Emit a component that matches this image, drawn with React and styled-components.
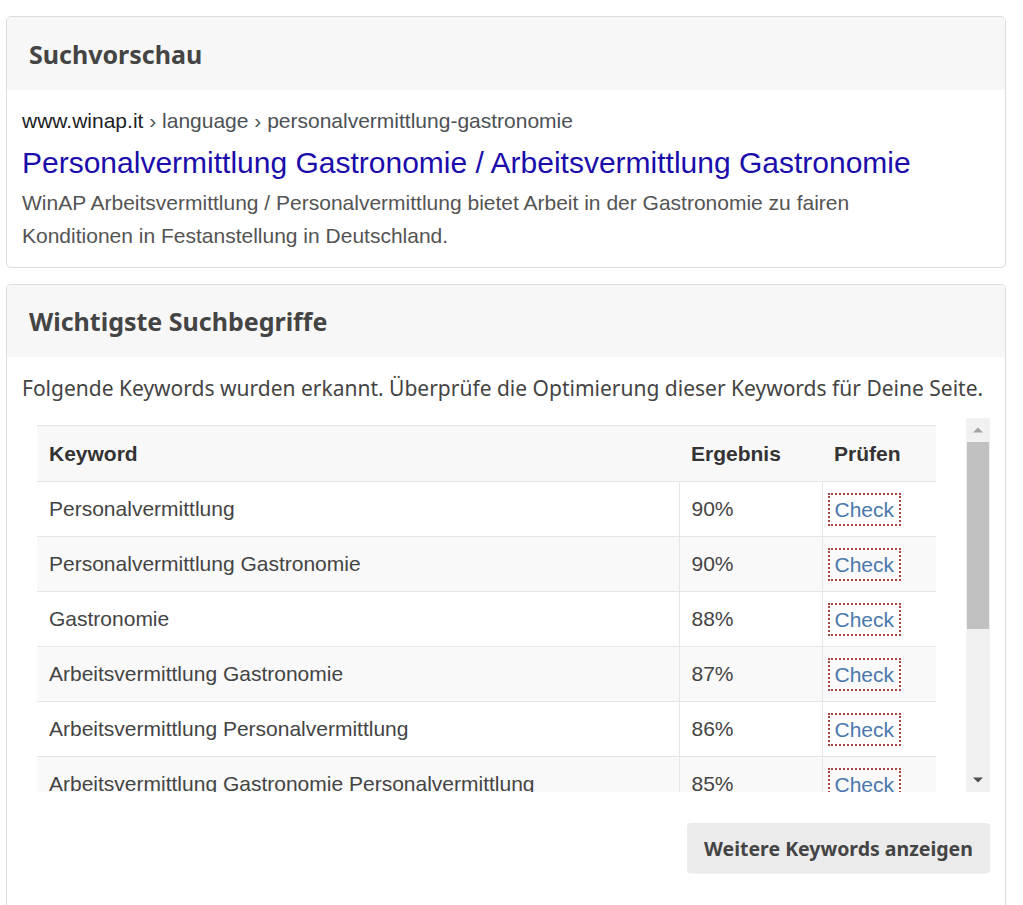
import React from "react"
import styled, { createGlobalStyle } from "styled-components"

const GlobalStyle = createGlobalStyle`
	html, body {
		margin: 0;
		padding: 0;
		background: #fff;
	}
	body {
		font-family: "Liberation Sans", Arial, sans-serif;
		color: #333;
	}
`

const Page = styled.div`
	width: 1000px;
	padding: 16px 0 0 6px;
	display: flex;
	flex-direction: column;
	gap: 16px;
`

const Card = styled.section`
	border: 1px solid #dcdcdc;
	border-radius: 5px;
	background: #fff;
	overflow: hidden;
	${p => p.$open && "border-bottom: none; border-bottom-left-radius: 0; border-bottom-right-radius: 0;"}
`

const CardHead = styled.h2`
	margin: 0;
	height: ${p => p.$h || "73px"};
	padding: 0 22px;
	display: flex;
	align-items: center;
	background: #f7f7f7;
	font-family: "Noto Sans", "Open Sans", sans-serif;
	font-size: 25px;
	font-weight: 700;
	color: #444;
`

const CardBody = styled.div`
	padding: ${p => p.$pad || "15px"};
`

const Crumbs = styled.div`
	font-size: 21px;
	line-height: 28px;
	color: #4d5156;
	white-space: nowrap;

	b {
		font-weight: 400;
		color: #202124;
	}
`

const ResultTitle = styled.a`
	display: block;
	margin-top: 9px;
	font-size: 30px;
	line-height: 38px;
	color: #1a0dab;
	text-decoration: none;
	white-space: nowrap;
`

const ResultDesc = styled.p`
	margin: 4px 0 0;
	max-width: 900px;
	font-size: 21px;
	line-height: 33px;
	color: #545454;
`

const Intro = styled.p`
	margin: 15px 0 0;
	font-family: "Noto Sans", "Open Sans", sans-serif;
	font-size: 21px;
	line-height: 32px;
	color: #444;
	white-space: nowrap;
`

const ScrollArea = styled.div`
	margin-top: 14px;
	height: 374px;
	display: flex;
`

const Viewport = styled.div`
	flex: 1;
	padding: 7px 31px 0 15px;
	overflow: hidden;
`

const ScrollBar = styled.div`
	width: 24px;
	display: flex;
	flex-direction: column;
	background: #f1f1f1;
`

const ScrollButton = styled.div`
	height: 24px;
	display: flex;
	align-items: center;
	justify-content: center;
	color: ${p => (p.$disabled ? "#a3a3a3" : "#505050")};
`

const Track = styled.div`
	flex: 1;
	padding: 0 1px;
`

const Thumb = styled.div`
	height: 187px;
	background: #c1c1c1;
`

const Table = styled.table`
	width: 899px;
	border-collapse: collapse;
	border-top: 1px solid #e3e3e3;
	font-size: 21px;
	color: #444;
`

const HeadCell = styled.th`
	height: 55px;
	padding: 0 12px;
	text-align: left;
	font-weight: 700;
	color: #333;
	background: #f8f8f8;
	width: ${p => p.$w || "auto"};
`

const Row = styled.tr`
	background: ${p => (p.$alt ? "#f9f9f9" : "#fff")};
	border-top: 1px solid #e6e6e6;
`

const Cell = styled.td`
	height: 54px;
	padding: 0 12px;
	border-left: ${p => (p.$first ? "none" : "1px solid #e6e6e6")};
	white-space: nowrap;
`

const CheckLink = styled.a`
	display: inline-block;
	margin-left: -7px;
	padding: 3px 5px 2px 5px;
	border: 2px dotted #a8453d;
	color: #4a78ad;
	text-decoration: none;
	line-height: 24px;
`

const Actions = styled.div`
	display: flex;
	justify-content: flex-end;
	padding-top: 31px;
	padding-bottom: 40px;
`

const MoreButton = styled.button`
	height: 50px;
	width: 303px;
	padding: 0;
	border: none;
	border-radius: 4px;
	background: #ebebeb;
	box-shadow: 0 1px 1px rgba(0, 0, 0, 0.05);
	font-family: "Noto Sans", "Open Sans", sans-serif;
	font-size: 19.5px;
	font-weight: 700;
	color: #444;
	cursor: pointer;
`

const Arrow = ({ down }) => (
	<svg width="10" height="6" viewBox="0 0 10 6">
		<polygon points={down ? "0,0.5 10,0.5 5,5.5" : "0,5.5 10,5.5 5,0.5"} fill="currentColor"/>
	</svg>
)

const keywords = [
	["Personalvermittlung", "90%"],
	["Personalvermittlung Gastronomie", "90%"],
	["Gastronomie", "88%"],
	["Arbeitsvermittlung Gastronomie", "87%"],
	["Arbeitsvermittlung Personalvermittlung", "86%"],
	["Arbeitsvermittlung Gastronomie Personalvermittlung", "85%"],
	["Arbeitsvermittlung", "84%"],
	["Festanstellung", "80%"],
	["Arbeit Gastronomie", "78%"],
	["Deutschland", "75%"],
	["WinAP", "72%"],
]

function App(){
	return (
		<>
			<GlobalStyle/>
			<Page>
				<Card>
					<CardHead>Suchvorschau</CardHead>
					<CardBody $pad="17px 15px 15px">
						<Crumbs><b>www.winap.it</b> › language › personalvermittlung-gastronomie</Crumbs>
						<ResultTitle href="#">Personalvermittlung Gastronomie / Arbeitsvermittlung Gastronomie</ResultTitle>
						<ResultDesc>
							WinAP Arbeitsvermittlung / Personalvermittlung bietet Arbeit in der Gastronomie zu fairen Konditionen in Festanstellung in Deutschland.
						</ResultDesc>
					</CardBody>
				</Card>
				<Card $open>
					<CardHead $h="72px">Wichtigste Suchbegriffe</CardHead>
					<CardBody $pad="0 15px">
						<Intro>Folgende Keywords wurden erkannt. Überprüfe die Optimierung dieser Keywords für Deine Seite.</Intro>
						<ScrollArea>
							<Viewport>
								<Table>
									<thead>
										<tr>
											<HeadCell>Keyword</HeadCell>
											<HeadCell $w="119px">Ergebnis</HeadCell>
											<HeadCell $w="90px">Prüfen</HeadCell>
										</tr>
									</thead>
									<tbody>
										{keywords.map(([word, score], i) => (
											<Row key={word} $alt={i % 2 === 1}>
												<Cell $first>{word}</Cell>
												<Cell>{score}</Cell>
												<Cell><CheckLink href="#">Check</CheckLink></Cell>
											</Row>
										))}
									</tbody>
								</Table>
							</Viewport>
							<ScrollBar>
								<ScrollButton $disabled><Arrow/></ScrollButton>
								<Track><Thumb/></Track>
								<ScrollButton><Arrow down/></ScrollButton>
							</ScrollBar>
						</ScrollArea>
						<Actions>
							<MoreButton>Weitere Keywords anzeigen</MoreButton>
						</Actions>
					</CardBody>
				</Card>
			</Page>
		</>
	)
}

export default App
